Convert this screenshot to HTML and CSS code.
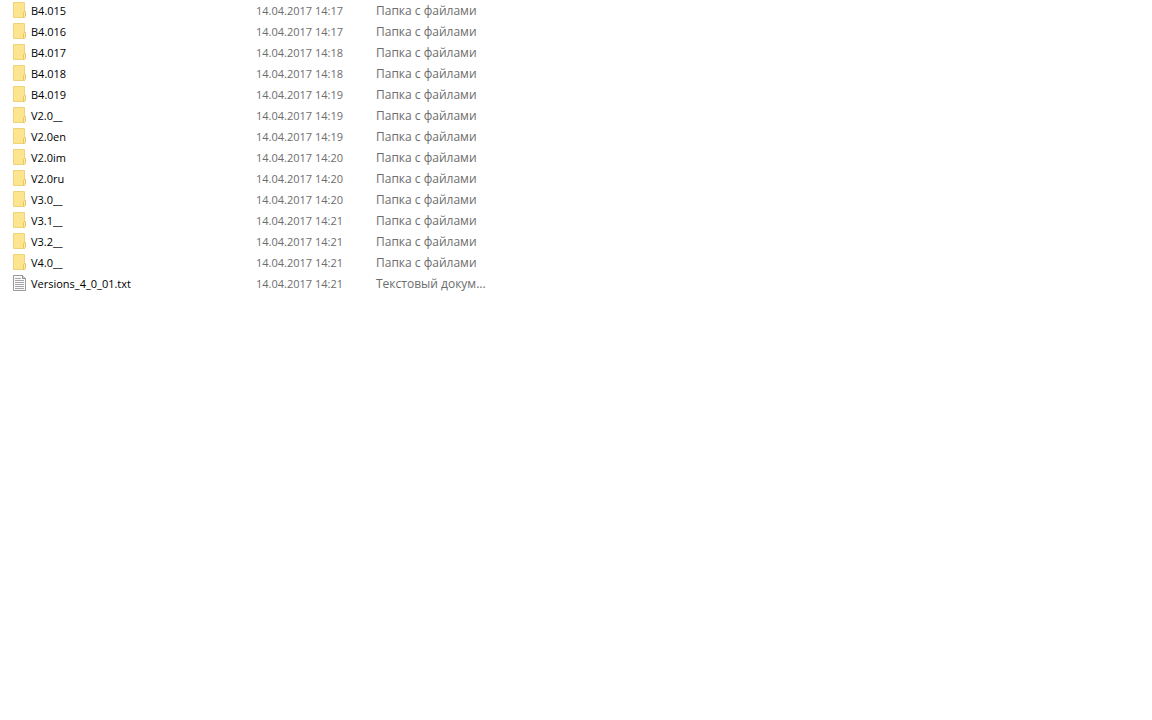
FILE: index.html
```html
<!DOCTYPE html>
<html lang="ru">

<head>
    <meta charset="UTF-8">
    <meta name="viewport" content="width=device-width, initial-scale=1.0">
    <title>Versions</title>
    <link rel="stylesheet" href="styles.css">
</head>

<body>
    <!-- icons shared by the rows -->
    <svg class="sprite" aria-hidden="true">
        <symbol id="folder" viewBox="0 0 13 16">
            <path d="M0.5 0.5H11.5V15.5H0.5Z" fill="#fde48f" stroke="#efd27a" />
            <path d="M10.5 15.5V10.5L11.5 9.5H12.5V14.5L11.5 15.5Z" fill="#fdeaa6" stroke="#e8c865" />
        </symbol>
        <symbol id="text" viewBox="0 0 13 16">
            <path d="M0.5 0.5H9.5L12.5 3.5V15.5H0.5Z" fill="#fafafa" stroke="#9a9a9a" />
            <path d="M9.5 0.5V3.5H12.5" fill="#d8d8d8" stroke="#8c8c8c" />
            <path d="M2 3.5H8M2 5.5H11M2 7.5H11M2 9.5H11M2 11.5H11M2 13.5H11" fill="none" stroke="#a6a6a6" />
        </symbol>
    </svg>

    <table class="files">
        <colgroup>
            <col class="col-name">
            <col class="col-date">
            <col class="col-type">
        </colgroup>
        <tbody>
            <tr>
                <td class="name"><svg class="icon"><use href="#folder" /></svg>B4.015</td>
                <td>14.04.2017 14:17</td>
                <td class="type">Папка с файлами</td>
            </tr>
            <tr>
                <td class="name"><svg class="icon"><use href="#folder" /></svg>B4.016</td>
                <td>14.04.2017 14:17</td>
                <td class="type">Папка с файлами</td>
            </tr>
            <tr>
                <td class="name"><svg class="icon"><use href="#folder" /></svg>B4.017</td>
                <td>14.04.2017 14:18</td>
                <td class="type">Папка с файлами</td>
            </tr>
            <tr>
                <td class="name"><svg class="icon"><use href="#folder" /></svg>B4.018</td>
                <td>14.04.2017 14:18</td>
                <td class="type">Папка с файлами</td>
            </tr>
            <tr>
                <td class="name"><svg class="icon"><use href="#folder" /></svg>B4.019</td>
                <td>14.04.2017 14:19</td>
                <td class="type">Папка с файлами</td>
            </tr>
            <tr>
                <td class="name"><svg class="icon"><use href="#folder" /></svg>V2.0__</td>
                <td>14.04.2017 14:19</td>
                <td class="type">Папка с файлами</td>
            </tr>
            <tr>
                <td class="name"><svg class="icon"><use href="#folder" /></svg>V2.0en</td>
                <td>14.04.2017 14:19</td>
                <td class="type">Папка с файлами</td>
            </tr>
            <tr>
                <td class="name"><svg class="icon"><use href="#folder" /></svg>V2.0im</td>
                <td>14.04.2017 14:20</td>
                <td class="type">Папка с файлами</td>
            </tr>
            <tr>
                <td class="name"><svg class="icon"><use href="#folder" /></svg>V2.0ru</td>
                <td>14.04.2017 14:20</td>
                <td class="type">Папка с файлами</td>
            </tr>
            <tr>
                <td class="name"><svg class="icon"><use href="#folder" /></svg>V3.0__</td>
                <td>14.04.2017 14:20</td>
                <td class="type">Папка с файлами</td>
            </tr>
            <tr>
                <td class="name"><svg class="icon"><use href="#folder" /></svg>V3.1__</td>
                <td>14.04.2017 14:21</td>
                <td class="type">Папка с файлами</td>
            </tr>
            <tr>
                <td class="name"><svg class="icon"><use href="#folder" /></svg>V3.2__</td>
                <td>14.04.2017 14:21</td>
                <td class="type">Папка с файлами</td>
            </tr>
            <tr>
                <td class="name"><svg class="icon"><use href="#folder" /></svg>V4.0__</td>
                <td>14.04.2017 14:21</td>
                <td class="type">Папка с файлами</td>
            </tr>
            <tr>
                <td class="name"><svg class="icon"><use href="#text" /></svg>Versions_4_0_01.txt</td>
                <td>14.04.2017 14:21</td>
                <td class="type">Текстовый докум...</td>
            </tr>
        </tbody>
    </table>
</body>

</html>
```

FILE: styles.css
```css
* {
    padding: 0;
    margin: 0;
}

body {
    background-color: #fff;
    font-family: "Open Sans", "Noto Sans", sans-serif;
    font-size: 11px;
    line-height: 21px;
    color: #6d6d6d;
}

.sprite {
    display: none;
}

.files {
    table-layout: fixed;
    width: 100%;
    border-collapse: collapse;
}

.files td {
    height: 21px;
    white-space: nowrap;
}

.col-name {
    width: 256px;
}

.col-date {
    width: 120px;
}

.files .name {
    display: flex;
    align-items: center;
    gap: 5px;
    padding-left: 13px;
    color: #000;
}

.files .type {
    font-size: 12px;
}

.icon {
    width: 13px;
    height: 16px;
    margin-bottom: 1px;
}
```
